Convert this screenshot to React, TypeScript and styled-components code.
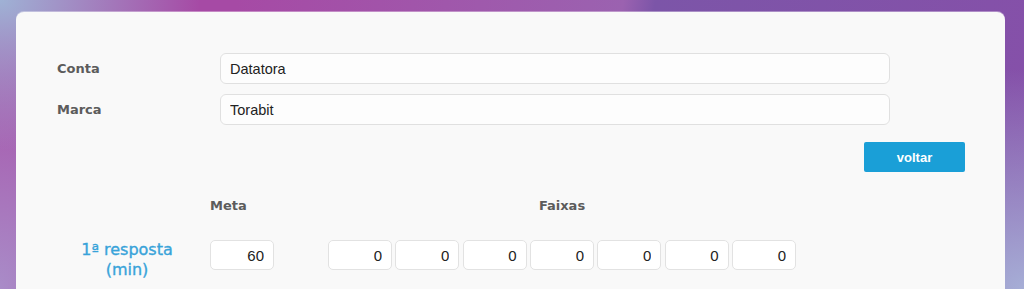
import styled, { createGlobalStyle } from 'styled-components'

const GlobalStyle = createGlobalStyle`
  html, body {
    margin: 0;
    padding: 0;
    height: 100%;
    overflow: hidden;
  }
  body {
    background:
      radial-gradient(ellipse 200px 150px at 0% 0%, #9fb2d5 0%, rgba(159, 178, 213, 0) 100%),
      radial-gradient(ellipse 260px 220px at 100% 100%, #a6aed6 0%, rgba(166, 174, 214, 0) 100%),
      radial-gradient(ellipse 160px 260px at 0% 100%, #a98cc8 0%, rgba(169, 140, 200, 0) 100%),
      linear-gradient(100deg, #a64aa5 22%, #9b62b0 58%, #7c55a8 61%, #8650a9 100%);
    font-family: 'DejaVu Sans', sans-serif;
  }
`

const faixas = [0, 0, 0, 0, 0, 0, 0]

export default function App() {
  return (
    <>
      <GlobalStyle />
      <Page>
        <Card>
          <Form>
            <FieldRow>
              <FieldLabel>Conta</FieldLabel>
              <TextInput defaultValue="Datatora" />
            </FieldRow>
            <FieldRow>
              <FieldLabel>Marca</FieldLabel>
              <TextInput defaultValue="Torabit" />
            </FieldRow>
          </Form>

          <Actions>
            <BackButton>voltar</BackButton>
          </Actions>

          <Table>
            <span />
            <HeadCell>Meta</HeadCell>
            <HeadCell $center>Faixas</HeadCell>

            <RowLabel>
              <LabelLine>1ª resposta</LabelLine>
              <LabelLine>(min)</LabelLine>
            </RowLabel>
            <div>
              <NumberInput defaultValue="60" />
            </div>
            <Bands>
              {faixas.map((v, i) => (
                <NumberInput key={i} defaultValue={String(v)} />
              ))}
            </Bands>
          </Table>
        </Card>
      </Page>
    </>
  )
}

const Page = styled.div`
  padding: 12px 19px 0 16px;
`

const Card = styled.div`
  background: #f9f9f9;
  border-radius: 8px 8px 0 0;
  box-shadow: 0 -1px 0 rgba(255, 255, 255, 0.35);
  padding: 41px 40px 0 41px;
  height: 277px;
  box-sizing: border-box;
  overflow: hidden;
`

const Form = styled.div`
  display: flex;
  flex-direction: column;
  gap: 10px;
  width: 833px;
`

const FieldRow = styled.div`
  display: grid;
  grid-template-columns: 163px 1fr;
  align-items: center;
`

const FieldLabel = styled.label`
  font-family: 'DejaVu Sans', sans-serif;
  font-weight: 700;
  font-size: 13px;
  color: #5c5c5c;
`

const TextInput = styled.input`
  box-sizing: border-box;
  height: 31px;
  width: 100%;
  padding: 0 9px;
  border: 1px solid #e0e0e0;
  border-radius: 6px;
  background: #fdfdfd;
  font-family: 'Liberation Sans', Arial, sans-serif;
  font-size: 14.5px;
  color: #222;
  outline: none;
`

const Actions = styled.div`
  display: flex;
  justify-content: flex-end;
  margin-top: 17px;
`

const BackButton = styled.button`
  width: 101px;
  height: 30px;
  border: none;
  border-radius: 2px;
  background: #1a9fd7;
  color: #fff;
  font-family: 'Liberation Sans', Arial, sans-serif;
  font-weight: 700;
  font-size: 13px;
  cursor: pointer;
`

const Table = styled.div`
  display: grid;
  grid-template-columns: 153px 118px 468px;
  row-gap: 26px;
  margin-top: 26px;
  align-items: start;
`

const HeadCell = styled.div<{ $center?: boolean }>`
  font-family: 'DejaVu Sans', sans-serif;
  font-weight: 700;
  font-size: 13px;
  line-height: 16px;
  color: #5c5c5c;
  text-align: ${p => (p.$center ? 'center' : 'left')};
`

const RowLabel = styled.div`
  width: 140px;
  display: flex;
  flex-direction: column;
  align-items: center;
  gap: 0.5px;
`

const LabelLine = styled.span`
  font-family: 'DejaVu Sans', sans-serif;
  font-size: 16px;
  line-height: 19px;
  color: #38a3d9;
  -webkit-text-stroke: 0.35px #38a3d9;
`

const Bands = styled.div`
  display: flex;
  gap: 3.33px;
`

const NumberInput = styled.input`
  box-sizing: border-box;
  width: 64px;
  height: 30px;
  padding: 0 9px;
  border: 1px solid #e2e2e2;
  border-radius: 5px;
  background: #fff;
  text-align: right;
  font-family: 'Liberation Sans', Arial, sans-serif;
  font-size: 15px;
  color: #222;
  outline: none;
`
